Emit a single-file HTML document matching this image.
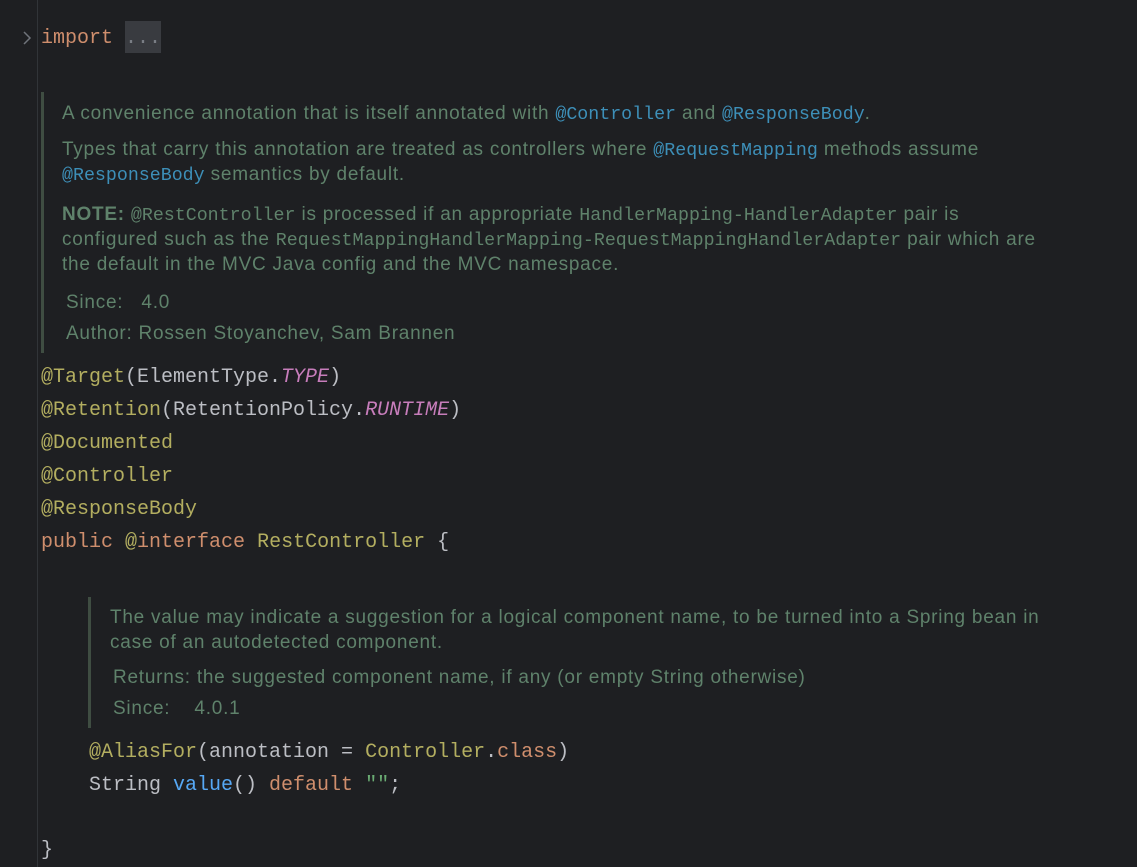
<!DOCTYPE html>
<html><head><meta charset="utf-8"><style>
html,body{margin:0;padding:0;width:1137px;height:867px;background:#1e1f22;overflow:hidden;position:relative}
.gl{position:absolute;left:37px;top:0;width:1px;height:867px;background:#313438}
.c{position:absolute;font-family:"Liberation Mono",monospace;font-size:20px;height:33px;line-height:33px;color:#bcbec4;white-space:pre}
.d{position:absolute;font-family:"Liberation Sans",sans-serif;font-size:19px;letter-spacing:0.75px;height:26px;line-height:26px;color:#5f826b;white-space:pre;margin-top:2px}
.m{font-family:"Liberation Mono",monospace;font-size:18.3px;letter-spacing:0}
.l{color:#3d8fb8}
.a{color:#b3ae60}.k{color:#cf8e6d}.i{color:#c77dbb;font-style:italic}.s{color:#6aab73}.f{color:#56a8f5}
.bar{position:absolute;width:3px;background:#3f4d42}
</style></head><body>
<div class="gl"></div>
<svg style="position:absolute;left:22px;top:31px" width="10" height="14"><path d="M2 1 L8 7 L2 13" fill="none" stroke="#6f737a" stroke-width="1.5"/></svg>
<div class="c" style="left:41px;top:22px"><span class="k">import</span></div>
<div style="position:absolute;left:125px;top:21px;width:36px;height:32px;background:#393b40"></div>
<div class="c" style="left:125px;top:22px;color:#7a7e85">...</div>

<div class="bar" style="left:41px;top:92px;height:261px"></div>
<div class="d" style="left:62px;top:99px">A convenience annotation that is itself annotated with <span class="m l">@Controller</span> and <span class="m l">@ResponseBody</span>.</div>
<div class="d" style="left:62px;top:135px">Types that carry this annotation are treated as controllers where <span class="m l">@RequestMapping</span> methods assume</div>
<div class="d" style="left:62px;top:160px"><span class="m l">@ResponseBody</span> semantics by default.</div>
<div class="d" style="left:62px;top:200px"><b>NOTE:</b> <span class="m">@RestController</span> is processed if an appropriate <span class="m">HandlerMapping-HandlerAdapter</span> pair is</div>
<div class="d" style="left:62px;top:225px">configured such as the <span class="m">RequestMappingHandlerMapping-RequestMappingHandlerAdapter</span> pair which are</div>
<div class="d" style="left:62px;top:250px">the default in the MVC Java config and the MVC namespace.</div>
<div class="d" style="left:66px;top:288px">Since:&nbsp;&nbsp;&nbsp;4.0</div>
<div class="d" style="left:66px;top:319px">Author:&nbsp;Rossen Stoyanchev, Sam Brannen</div>

<div class="c" style="left:41px;top:361px"><span class="a">@Target</span>(ElementType.<span class="i">TYPE</span>)</div>
<div class="c" style="left:41px;top:394px"><span class="a">@Retention</span>(RetentionPolicy.<span class="i">RUNTIME</span>)</div>
<div class="c" style="left:41px;top:427px"><span class="a">@Documented</span></div>
<div class="c" style="left:41px;top:460px"><span class="a">@Controller</span></div>
<div class="c" style="left:41px;top:493px"><span class="a">@ResponseBody</span></div>
<div class="c" style="left:41px;top:526px"><span class="k">public </span><span class="a">@</span><span class="k">interface </span><span class="a">RestController</span> {</div>

<div class="bar" style="left:88px;top:597px;height:131px"></div>
<div class="d" style="left:110px;top:603px">The value may indicate a suggestion for a logical component name, to be turned into a Spring bean in</div>
<div class="d" style="left:110px;top:628px">case of an autodetected component.</div>
<div class="d" style="left:113px;top:663px">Returns:&nbsp;the suggested component name, if any (or empty String otherwise)</div>
<div class="d" style="left:113px;top:694px">Since:&nbsp;&nbsp;&nbsp;&nbsp;4.0.1</div>

<div class="c" style="left:89px;top:736px"><span class="a">@AliasFor</span>(annotation = <span class="a">Controller</span>.<span class="k">class</span>)</div>
<div class="c" style="left:89px;top:769px">String <span class="f">value</span>() <span class="k">default</span> <span class="s">""</span>;</div>
<div class="c" style="left:41px;top:834px">}</div>
</body></html>
